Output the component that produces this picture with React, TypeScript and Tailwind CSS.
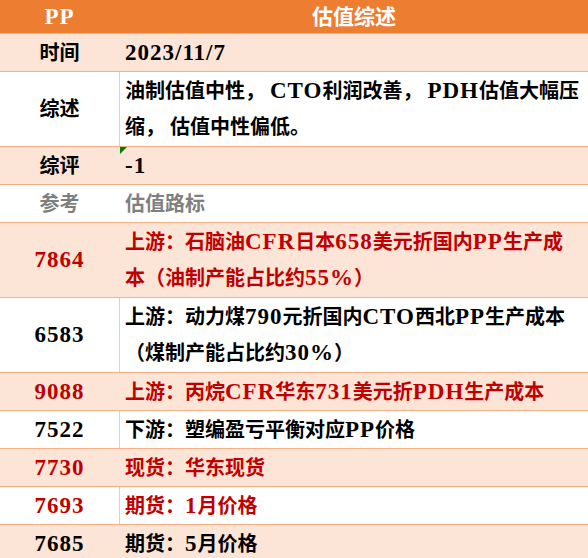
import type { ReactNode } from 'react';

const L = ({ children }: { children: ReactNode }) => (
  <span className="text-[23px] tracking-[1px]">{children}</span>
);

type Row = {
  label: ReactNode;
  value: ReactNode;
  tall?: boolean;
  peach?: boolean;
  tone?: 'black' | 'red' | 'gray';
  divider?: boolean;
  flag?: boolean;
};

const rows: Row[] = [
  { label: '时间', value: <L>2023/11/7</L>, peach: true },
  {
    label: '综述',
    tall: true,
    divider: true,
    value: (
      <>
        油制估值中性， <L>CTO</L>利润改善， <L>PDH</L>估值大幅压
        <br />
        缩， 估值中性偏低。
      </>
    ),
  },
  { label: '综评', value: <L>-1</L>, peach: true, flag: true },
  { label: '参考', value: '估值路标', tone: 'gray' },
  {
    label: <L>7864</L>,
    tall: true,
    peach: true,
    tone: 'red',
    value: (
      <>
        上游：石脑油<L>CFR</L>日本<L>658</L>美元折国内<L>PP</L>生产成
        <br />
        本（油制产能占比约<L>55%</L>）
      </>
    ),
  },
  {
    label: <L>6583</L>,
    tall: true,
    divider: true,
    value: (
      <>
        上游：动力煤<L>790</L>元折国内<L>CTO</L>西北<L>PP</L>生产成本
        <br />
        （煤制产能占比约<L>30%</L>）
      </>
    ),
  },
  {
    label: <L>9088</L>,
    peach: true,
    tone: 'red',
    value: (
      <>
        上游：丙烷<L>CFR</L>华东<L>731</L>美元折<L>PDH</L>生产成本
      </>
    ),
  },
  { label: <L>7522</L>, divider: true, value: <>下游：塑编盈亏平衡对应<L>PP</L>价格</> },
  { label: <L>7730</L>, peach: true, tone: 'red', value: '现货：华东现货' },
  { label: <L>7693</L>, divider: true, tone: 'red', value: <>期货：<L>1</L>月价格</> },
  { label: <L>7685</L>, peach: true, value: <>期货：<L>5</L>月价格</> },
];

const toneClass = {
  black: 'text-black',
  red: 'text-[#c00000]',
  gray: 'text-[#7f7f7f]',
};

export default function App() {
  return (
    <div
      className="h-[558px] w-[588px] overflow-hidden bg-white font-bold text-[20px] leading-[36px] whitespace-nowrap"
      style={{ fontFamily: '"Liberation Serif", "Noto Sans CJK SC", serif' }}
    >
      <div className="flex h-[34px] border-b border-[#f4b084] bg-[#ed7d31] text-white">
        <div className="flex w-[119px] items-center justify-center">
          <L>PP</L>
        </div>
        <div className="flex flex-1 items-center justify-center pl-[1px] text-[21px]">估值综述</div>
      </div>

      {rows.map((r, i) => (
        <div
          key={i}
          className={`flex border-b border-[#f4b084] ${r.tall ? 'h-[75px]' : 'h-[38px]'} ${
            r.peach ? 'bg-[#fce4d6]' : 'bg-white'
          } ${toneClass[r.tone ?? 'black']}`}
        >
          <div className="flex w-[119px] shrink-0 items-center justify-center">{r.label}</div>
          <div
            className={`relative flex flex-1 items-center border-l pl-[5px] ${
              r.divider ? 'border-[#d4d4d4]' : 'border-transparent'
            }`}
          >
            {r.flag && (
              <span className="absolute left-0 top-0 h-0 w-0 border-t-[7px] border-r-[7px] border-t-[#008000] border-r-transparent" />
            )}
            <div>{r.value}</div>
          </div>
        </div>
      ))}
    </div>
  );
}
